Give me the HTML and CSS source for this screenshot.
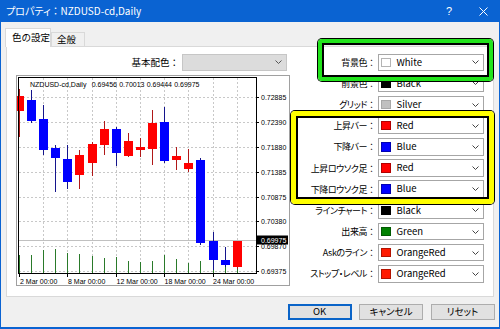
FILE: index.html
```html
<!DOCTYPE html>
<html lang="ja">
<head>
<meta charset="utf-8">
<title>プロパティ</title>
<link rel="stylesheet" href="styles.css">
</head>
<body>
<div class="window">
  <div class="titlebar">
    <span class="title">プロパティ<span class="colon">：</span>NZDUSD-cd,Daily</span>
    <span class="tb-btn help">?</span>
    <span class="tb-btn close"><svg width="9" height="9" viewBox="0 0 9 9"><path d="M0.5 0.5L8.5 8.5M8.5 0.5L0.5 8.5" stroke="#fff" stroke-width="1" fill="none"/></svg></span>
  </div>
  <div class="tabs">
    <div class="tab tab-active">色の設定</div>
    <div class="tab tab-plain">全般</div>
  </div>
  <div class="panel">
    <div class="left">
      <div class="scheme">
        <span class="scheme-lbl">基本配色<span class="colon">：</span></span>
        <div class="combo-disabled"><svg class="chev" width="7" height="4" viewBox="0 0 7 4"><path d="M0.5 0.5L3.5 3.5L6.5 0.5" stroke="#555" fill="none"/></svg></div>
      </div>
      <div class="chart">
        <svg class="chart-svg" width="272" height="209" viewBox="17 76 272 209">
          <g stroke="#c8c8c8" stroke-dasharray="2 2" fill="none">
            <path d="M19 97.5H256M19 122.5H256M19 147.5H256M19 172.5H256M19 197.5H256M19 221.5H256M19 246.5H256M19 271.5H256"/>
            <path d="M43.5 78V273M67.5 78V273M92.5 78V273M116.5 78V273M140.5 78V273M164.5 78V273M188.5 78V273M213.5 78V273M237.5 78V273"/>
          </g>
          <path d="M19 240.5H256" stroke="#c0c0c0" fill="none"/>
          <g stroke="#2a7a2a" fill="none">
            <path d="M19.5 255V273M31.5 255V273M43.5 250V273M55.5 249V273M67.5 253V273M79.5 254V273M92.5 256V273M104.5 258V273M116.5 257V273M128.5 261V273M140.5 262V273M152.5 261V273M164.5 255V273M176.5 259V273M188.5 263V273M200.5 261V273M213.5 261V273M225.5 265V273M237.5 265V273"/>
          </g>
          <g stroke="#b01818" fill="none">
            <path d="M19.5 89V137M79.5 150V189M92.5 142V176M104.5 121V155M128.5 133V157M140.5 138V157M152.5 110V165M176.5 147V170M188.5 149V172M237.5 241V269"/>
          </g>
          <g stroke="#14148c" fill="none">
            <path d="M31.5 90V123M43.5 105V155M55.5 145V192M67.5 145V189M116.5 127V166M164.5 107V163M200.5 158V245M213.5 232V270M225.5 247V267"/>
          </g>
          <g fill="#ff0000">
            <rect x="15" y="96" width="9" height="15"/>
            <rect x="75" y="155" width="9" height="20"/>
            <rect x="88" y="144" width="9" height="19"/>
            <rect x="100" y="129" width="9" height="16"/>
            <rect x="124" y="141" width="9" height="15"/>
            <rect x="136" y="147" width="9" height="3"/>
            <rect x="148" y="123" width="9" height="26"/>
            <rect x="172" y="156" width="9" height="4"/>
            <rect x="184" y="163" width="9" height="6"/>
            <rect x="233" y="241" width="9" height="26"/>
          </g>
          <g fill="#0000ff">
            <rect x="27" y="100" width="9" height="21"/>
            <rect x="39" y="119" width="9" height="31"/>
            <rect x="51" y="148" width="9" height="10"/>
            <rect x="63" y="159" width="9" height="23"/>
            <rect x="112" y="129" width="9" height="24"/>
            <rect x="160" y="122" width="9" height="39"/>
            <rect x="196" y="160" width="9" height="83"/>
            <rect x="209" y="241" width="9" height="19"/>
            <rect x="221" y="260" width="9" height="5"/>
          </g>
          <rect x="18.5" y="77.5" width="238" height="196" fill="none" stroke="#000"/>
          <g stroke="#000" fill="none">
            <path d="M256.5 97.5H259M256.5 122.5H259M256.5 147.5H259M256.5 172.5H259M256.5 197.5H259M256.5 221.5H259M256.5 246.5H259M256.5 271.5H259"/>
            <path d="M19.5 273.5V277M67.5 273.5V277M116.5 273.5V277M164.5 273.5V277M213.5 273.5V277"/>
          </g>
          <text class="ct" y="86.5"><tspan x="30">NZDUSD-cd,Daily</tspan><tspan x="91.7">0.69456</tspan><tspan x="119.2">0.70013</tspan><tspan x="146.7">0.69444</tspan><tspan x="174.2">0.69975</tspan></text>
          <g class="ct">
            <text x="261" y="100">0.72885</text>
            <text x="261" y="125">0.72390</text>
            <text x="261" y="150">0.71880</text>
            <text x="261" y="175">0.71385</text>
            <text x="261" y="200">0.70875</text>
            <text x="261" y="224">0.70380</text>
            <text x="261" y="249">0.69870</text>
            <text x="261" y="274">0.69375</text>
          </g>
          <rect x="257" y="235.5" width="31" height="9" fill="#000"/>
          <text class="ct" x="261" y="242.5" fill="#fff">0.69975</text>
          <g class="ct">
            <text x="20" y="283.5">2 Mar 00:00</text>
            <text x="68" y="283.5">8 Mar 00:00</text>
            <text x="116.5" y="283.5">12 Mar 00:00</text>
            <text x="164.5" y="283.5">18 Mar 00:00</text>
            <text x="213" y="283.5">24 Mar 00:00</text>
          </g>
        </svg>
      </div>
    </div>
    <div class="right">
      <span class="lbl">背景色<span class="colon">：</span></span><div class="combo"><span class="swatch sw-white"></span><span class="name">White</span><svg class="chev" width="7" height="4" viewBox="0 0 7 4"><path d="M0.5 0.5L3.5 3.5L6.5 0.5" stroke="#444" fill="none"/></svg></div>
      <span class="lbl">前景色<span class="colon">：</span></span><div class="combo"><span class="swatch sw-black"></span><span class="name">Black</span><svg class="chev" width="7" height="4" viewBox="0 0 7 4"><path d="M0.5 0.5L3.5 3.5L6.5 0.5" stroke="#444" fill="none"/></svg></div>
      <span class="lbl">グリッド<span class="colon">：</span></span><div class="combo"><span class="swatch sw-silver"></span><span class="name">Silver</span><svg class="chev" width="7" height="4" viewBox="0 0 7 4"><path d="M0.5 0.5L3.5 3.5L6.5 0.5" stroke="#444" fill="none"/></svg></div>
      <span class="lbl">上昇バー<span class="colon">：</span></span><div class="combo"><span class="swatch sw-red"></span><span class="name">Red</span><svg class="chev" width="7" height="4" viewBox="0 0 7 4"><path d="M0.5 0.5L3.5 3.5L6.5 0.5" stroke="#444" fill="none"/></svg></div>
      <span class="lbl">下降バー<span class="colon">：</span></span><div class="combo"><span class="swatch sw-blue"></span><span class="name">Blue</span><svg class="chev" width="7" height="4" viewBox="0 0 7 4"><path d="M0.5 0.5L3.5 3.5L6.5 0.5" stroke="#444" fill="none"/></svg></div>
      <span class="lbl">上昇ロウソク足<span class="colon">：</span></span><div class="combo"><span class="swatch sw-red"></span><span class="name">Red</span><svg class="chev" width="7" height="4" viewBox="0 0 7 4"><path d="M0.5 0.5L3.5 3.5L6.5 0.5" stroke="#444" fill="none"/></svg></div>
      <span class="lbl">下降ロウソク足<span class="colon">：</span></span><div class="combo"><span class="swatch sw-blue"></span><span class="name">Blue</span><svg class="chev" width="7" height="4" viewBox="0 0 7 4"><path d="M0.5 0.5L3.5 3.5L6.5 0.5" stroke="#444" fill="none"/></svg></div>
      <span class="lbl">ラインチャート<span class="colon">：</span></span><div class="combo"><span class="swatch sw-black"></span><span class="name">Black</span><svg class="chev" width="7" height="4" viewBox="0 0 7 4"><path d="M0.5 0.5L3.5 3.5L6.5 0.5" stroke="#444" fill="none"/></svg></div>
      <span class="lbl">出来高<span class="colon">：</span></span><div class="combo"><span class="swatch sw-green"></span><span class="name">Green</span><svg class="chev" width="7" height="4" viewBox="0 0 7 4"><path d="M0.5 0.5L3.5 3.5L6.5 0.5" stroke="#444" fill="none"/></svg></div>
      <span class="lbl">Askのライン<span class="colon">：</span></span><div class="combo"><span class="swatch sw-orangered"></span><span class="name">OrangeRed</span><svg class="chev" width="7" height="4" viewBox="0 0 7 4"><path d="M0.5 0.5L3.5 3.5L6.5 0.5" stroke="#444" fill="none"/></svg></div>
      <span class="lbl">ストップ・レベル<span class="colon">：</span></span><div class="combo"><span class="swatch sw-orangered"></span><span class="name">OrangeRed</span><svg class="chev" width="7" height="4" viewBox="0 0 7 4"><path d="M0.5 0.5L3.5 3.5L6.5 0.5" stroke="#444" fill="none"/></svg></div>
    </div>
  </div>
  <div class="buttons">
    <button class="btn btn-default">OK</button>
    <button class="btn">キャンセル</button>
    <button class="btn">リセット</button>
  </div>
  <div class="hl hl-green"></div>
  <div class="hl hl-yellow"></div>
</div>
</body>
</html>
```
FILE: styles.css
```css
* { box-sizing: border-box; }
html, body { margin: 0; padding: 0; }
body {
  width: 500px;
  height: 329px;
  overflow: hidden;
  background: #f0f0f0;
  font-family: "Noto Sans CJK JP", "Noto Sans", sans-serif;
  font-size: 9.5px;
  color: #000;
}
.window {
  position: relative;
  width: 500px;
  height: 329px;
  border: 1px solid #0a63d2;
  border-top: none;
  border-bottom-width: 2px;
  background: #f0f0f0;
  display: flex;
  flex-direction: column;
}
.titlebar {
  height: 22px;
  flex: none;
  background: #0a63d2;
  color: #fff;
  display: flex;
  align-items: center;
  padding-left: 6px;
  margin: 0 -1px;
}
.title {
  flex: 1;
  font-size: 10px;
  line-height: 1;
  font-feature-settings: "palt";
}
.colon { font-feature-settings: normal; }
.tb-btn {
  width: 34px;
  height: 22px;
  display: flex;
  align-items: center;
  justify-content: center;
}
.help { font-family: "Liberation Sans", sans-serif; font-size: 11px; }
.tabs {
  height: 24px;
  flex: none;
  display: flex;
  align-items: flex-end;
  padding-left: 4px;
}
.tab {
  border: 1px solid #d9d9d9;
  border-bottom: none;
  display: flex;
  align-items: center;
  line-height: 1;
}
.tab-active {
  width: 46px;
  height: 19px;
  margin-bottom: -1px;
  background: #fff;
  padding-left: 6px;
  position: relative;
  z-index: 1;
}
.tab-plain {
  width: 34px;
  height: 14px;
  background: #f0f0f0;
  padding-left: 5px;
}
.panel {
  flex: none;
  margin-left: 5px;
  width: 488px;
  height: 251px;
  background: #fff;
  border: 1px solid #d9d9d9;
  display: flex;
  padding-top: 6.5px;
}
.left {
  margin-left: 9px;
  width: 275px;
  display: flex;
  flex-direction: column;
}
.scheme {
  height: 17.5px;
  display: flex;
  justify-content: flex-end;
  align-items: center;
  gap: 3px;
  padding-right: 4px;
}
.scheme-lbl { line-height: 1; font-feature-settings: "palt"; }
.combo-disabled {
  width: 105px;
  height: 17.5px;
  background: #dcdcdc;
  border: 1px solid #c6c6c6;
  display: flex;
  align-items: center;
  justify-content: flex-end;
  padding-right: 4px;
}
.chart {
  margin-top: 4px;
  width: 274px;
  height: 211px;
  border: 1px solid #a0a0a0;
  background: #fff;
}
.chart-svg { display: block; }
.ct { font-family: "Liberation Sans", Arial, sans-serif; font-size: 7px; }
.right {
  display: grid;
  grid-template-columns: 85px 106px;
  column-gap: 2px;
  row-gap: 3.67px;
  grid-auto-rows: 17.5px;
  align-content: start;
}
.lbl {
  align-self: center;
  text-align: right;
  white-space: nowrap;
  line-height: 1;
  font-size: 9px;
  letter-spacing: -0.45px;
  font-feature-settings: "palt";
}
.lbl .colon { letter-spacing: 0; }
.combo {
  border: 1px solid #a6a6a6;
  background: #fff;
  display: flex;
  align-items: center;
  padding-left: 2px;
  padding-right: 4px;
}
.swatch {
  width: 9.5px;
  height: 9.5px;
  flex: none;
  border: 1px solid rgba(0, 0, 0, 0.3);
}
.sw-white { background: #fff; border-color: #b4b4b4; }
.sw-black { background: #000; }
.sw-silver { background: #c0c0c0; border-color: #a8a8a8; }
.sw-red { background: #ff0000; }
.sw-blue { background: #0000ff; }
.sw-green { background: #008000; }
.sw-orangered { background: #ff1a00; }
.name { flex: 1; margin-left: 6px; line-height: 1; }
.chev { display: block; flex: none; }
.buttons {
  display: flex;
  justify-content: flex-end;
  gap: 7.5px;
  padding-right: 4.5px;
  margin-top: 6.5px;
}
.btn {
  width: 64px;
  height: 16.5px;
  padding: 0;
  margin: 0;
  background: #e1e1e1;
  border: 1px solid #adadad;
  font: inherit;
  line-height: 1;
  color: #000;
  display: flex;
  align-items: center;
  justify-content: center;
  font-feature-settings: "palt";
}
.btn-default {
  border-color: #0a64c8;
  box-shadow: inset 0 0 0 1px #0a64c8;
}
.hl {
  position: absolute;
  border-style: solid;
  border-radius: 4px;
  pointer-events: none;
}
.hl-green {
  left: 317px;
  top: 39px;
  width: 175px;
  height: 42px;
  border-width: 4px;
  border-color: #22e41c;
  box-shadow: 0 0 0 1px #000, inset 0 0 0 2px #000;
}
.hl-yellow {
  left: 290px;
  top: 111px;
  width: 203px;
  height: 93px;
  border-width: 5px;
  border-color: #ffff00;
  box-shadow: 0 0 0 1px #000, inset 0 0 0 2px #000;
}
```
